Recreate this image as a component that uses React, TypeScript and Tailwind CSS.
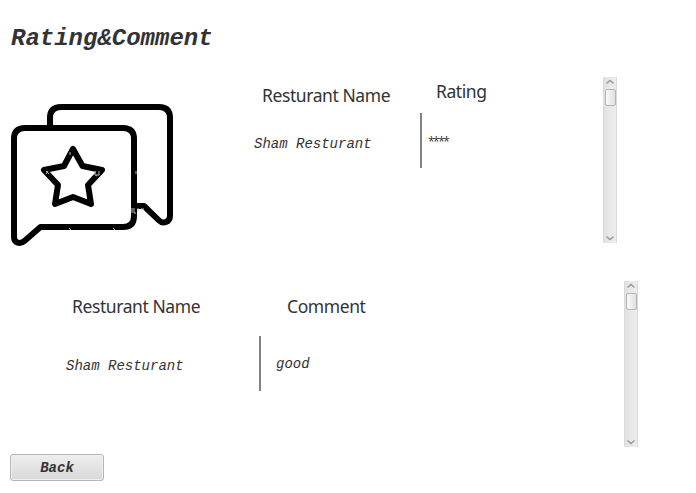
import React from "react";

const mono = "font-['Liberation_Mono',monospace] italic whitespace-nowrap";
const label = "font-['Noto_Sans','Open_Sans',sans-serif] text-[17.500px] tracking-[-0.420px] leading-6 whitespace-nowrap";

function RatingIcon() {
  return (
    <svg className="block h-[146px] w-[166px]" viewBox="9 102 166 146" fill="none" stroke="#000" strokeWidth="6" strokeLinejoin="round">
      <path d="M50 126V118Q50 107 61 107H159Q170 107 170 118V216C170 222 163 224.500 159 220.500L144 206H134" />
      <path d="M25 128H123Q134 128 134 139V216Q134 227 123 227H40.500L25 240.500C20 245 14 243 14 237V139Q14 128 25 128Z" />
      <path d="M73 149L82.500 166L102 170L88 185L91 204L73 197L55 204L58 185L44 170L64 166Z" />
      <g stroke="#bbb" strokeWidth="1">
        <path d="M70 152v3M46 171l3 3M48 171l-2 3M95 171v4l2 1M99 171v4h-3M136 171v3M132 208v5M134 208v5h2M138 208v3M141 209h3M69 228l2 2M113 228l2 2" />
      </g>
    </svg>
  );
}

function Chevron({ down = false }: { down?: boolean }) {
  return (
    <svg className={down ? "h-[6px] w-[8px] rotate-180" : "h-[6px] w-[8px]"} viewBox="0 0 8 6" fill="none" stroke="#999" strokeWidth="1.500">
      <path d="M.5 4.500L4 1.500L7.500 4.500" />
    </svg>
  );
}

function ScrollBar() {
  return (
    <div className="flex h-[166px] w-[14px] flex-col items-center justify-between border-x border-[#dadada] bg-linear-to-r from-[#e1e1e1] via-[#e9e9e9] to-[#ececec] pt-[2px] pb-[2px]">
      <div className="flex flex-col items-center gap-1">
        <Chevron />
        <div className="h-[17px] w-[11px] rounded-[2px] border border-[#b5b5b5] bg-linear-to-r from-[#f8f8f8] to-[#e1e1e1]" />
      </div>
      <Chevron down />
    </div>
  );
}

function Divider() {
  return <div className="mt-[36px] h-[55px] w-[2px] bg-[#838383]" />;
}

export default function App() {
  return (
    <main className="flex h-[493px] w-[696px] flex-col items-start overflow-hidden bg-white text-[#333]">
      <h1 className={`${mono} mt-[25px] ml-[11px] h-[28px] text-[24px] leading-[28px] font-bold`}>Rating&amp;Comment</h1>

      <section className="mt-[24px] flex h-[166px]">
        <div className="w-[244px] pt-[25px] pl-[9px]">
          <RatingIcon />
        </div>
        <div className="flex w-[176px] flex-col pl-[10px]">
          <div className={`${label} mt-[6px] ml-[8px]`}>Resturant Name</div>
          <div className={`${mono} mt-[29px] text-[14px] leading-4`}>Sham Resturant</div>
        </div>
        <Divider />
        <div className="flex w-[181px] flex-col pl-[6px]">
          <div className={`${label} mt-[2px] ml-[8px]`}>Rating</div>
          <div className="mt-[31px] font-['Open_Sans',sans-serif] text-[12px] leading-4 tracking-[-1.500px]">****</div>
        </div>
        <ScrollBar />
      </section>

      <section className="mt-[38px] flex h-[166px]">
        <div className="flex w-[259px] flex-col pl-[66px]">
          <div className={`${label} mt-[13px] ml-[6px]`}>Resturant Name</div>
          <div className={`${mono} mt-[40px] text-[14px] leading-4`}>Sham Resturant</div>
        </div>
        <div className="pt-[19px]">
          <Divider />
        </div>
        <div className="flex w-[363px] flex-col pl-[15px]">
          <div className={`${label} mt-[13px] ml-[11px]`}>Comment</div>
          <div className={`${mono} mt-[38px] text-[14px] leading-4`}>good</div>
        </div>
        <ScrollBar />
      </section>

      <button className={`${mono} mt-[7px] ml-[10px] h-[27px] w-[94px] rounded-[3px] border border-[#b5b5b5] bg-linear-to-b from-[#eeeeee] to-[#d9d9d9] text-[14px] leading-4 font-bold shadow-[inset_0_0_0_1px_#f0f0f0]`}>
        Back
      </button>
    </main>
  );
}
